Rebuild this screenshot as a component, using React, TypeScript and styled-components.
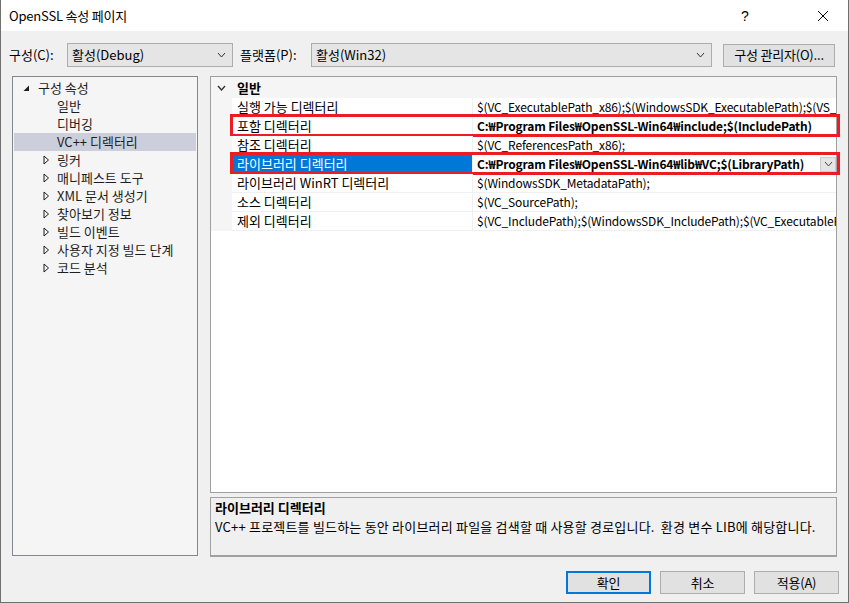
import React from "react";
import styled, { createGlobalStyle } from "styled-components";

const GlobalStyle = createGlobalStyle`
  html, body { margin: 0; padding: 0; background: #ffffff; }
  body {
    font-family: "Noto Sans CJK KR", "Noto Sans", sans-serif;
    font-size: 13px;
    color: #000000;
  }
  * { box-sizing: border-box; }
`;

const Window = styled.div`
  width: 849px;
  height: 603px;
  display: flex;
  flex-direction: column;
  background: #f0f0f0;
  border-left: 1px solid #707070;
  border-right: 1px solid #707070;
  border-bottom: 1px solid #707070;
  overflow: hidden;
`;

const TitleBar = styled.div`
  height: 31px;
  flex: none;
  background: #ffffff;
  display: flex;
  align-items: center;
  padding-left: 8px;
  padding-right: 2px;
`;

const TitleText = styled.div`
  flex: 1;
  line-height: 16px;
  color: #000;
  letter-spacing: -0.2px;
`;

const CaptionButton = styled.div<{ $gapRight?: number }>`
  width: 46px;
  height: 30px;
  display: flex;
  align-items: center;
  justify-content: center;
  margin-right: ${(p) => p.$gapRight ?? 0}px;
  font-family: "Liberation Sans", sans-serif;
  font-size: 14px;
  color: #000;
`;

const Toolbar = styled.div`
  display: flex;
  align-items: center;
  height: 24px;
  margin-top: 12px;
  padding-left: 8px;
`;

const ToolLabel = styled.div<{ $width: number; $pad?: number }>`
  width: ${(p) => p.$width}px;
  padding-left: ${(p) => p.$pad ?? 0}px;
  line-height: 16px;
  white-space: nowrap;
`;

const Combo = styled.div<{ $width: number }>`
  width: ${(p) => p.$width}px;
  height: 24px;
  background: #e5e5e5;
  border: 1px solid #adadad;
  display: flex;
  align-items: center;
  padding: 0 6px 0 4px;
`;

const ComboText = styled.div`
  flex: 1;
  line-height: 16px;
  white-space: nowrap;
`;

const ToolSpacer = styled.div`
  width: 11px;
  flex: none;
`;

const PushButton = styled.div<{ $width: number; $default?: boolean }>`
  width: ${(p) => p.$width}px;
  height: 23px;
  background: #e1e1e1;
  border: ${(p) => (p.$default ? "2px solid #0078d7" : "1px solid #adadad")};
  display: flex;
  align-items: center;
  justify-content: center;
  line-height: 16px;
  white-space: nowrap;
  letter-spacing: -0.2px;
`;

const Main = styled.div`
  display: flex;
  margin-top: 9px;
  padding-left: 11px;
  gap: 12px;
`;

const Tree = styled.div`
  width: 186px;
  height: 480px;
  background: #f5f5f5;
  border: 1px solid #828790;
  padding-top: 2px;
  display: flex;
  flex-direction: column;
`;

const TreeRow = styled.div<{ $level: number; $selected?: boolean }>`
  height: 18px;
  margin: 0 1px;
  display: flex;
  align-items: center;
  padding-left: ${(p) => (p.$level === 0 ? 9 : 29)}px;
  background: ${(p) => (p.$selected ? "#cccedb" : "transparent")};
  color: #1e1e1e;
  line-height: 16px;
  white-space: nowrap;
`;

const Expander = styled.div<{ $level: number }>`
  width: ${(p) => (p.$level === 0 ? 15 : 14)}px;
  height: 18px;
  display: flex;
  align-items: center;
  flex: none;
`;

const RightCol = styled.div`
  width: 627px;
  display: flex;
  flex-direction: column;
  gap: 4px;
`;

const Grid = styled.div`
  height: 417px;
  background: #ffffff;
  border: 1px solid #a0a0a0;
  display: flex;
  flex-direction: column;
`;

const CategoryRow = styled.div`
  height: 21px;
  display: flex;
  align-items: center;
  background: #f5f5f5;
  line-height: 16px;
`;

const CategoryLabel = styled.span`
  padding-left: 5px;
  font-weight: 700;
`;

const Gutter = styled.div`
  width: 21px;
  flex: none;
  align-self: stretch;
  display: flex;
  align-items: center;
  justify-content: center;
  background: #f5f5f5;
`;

const PropRow = styled.div`
  position: relative;
  height: 19px;
  display: flex;
`;

const NameCell = styled.div<{ $selected?: boolean }>`
  width: 241px;
  flex: none;
  display: flex;
  align-items: center;
  padding-left: 5px;
  border-right: 1px solid #f0f0f0;
  border-bottom: 1px solid #f0f0f0;
  background: ${(p) => (p.$selected ? "#0078d7" : "#ffffff")};
  color: ${(p) => (p.$selected ? "#ffffff" : "#000000")};
  line-height: 16px;
  white-space: nowrap;
`;

const ValueCell = styled.div`
  flex: 1;
  min-width: 0;
  display: flex;
  align-items: center;
  padding-left: 4px;
  border-bottom: 1px solid #f0f0f0;
  overflow: hidden;
`;

const ValueText = styled.div<{ $bold?: boolean }>`
  flex: 1;
  min-width: 0;
  overflow: hidden;
  white-space: nowrap;
  font-size: 12px;
  letter-spacing: -0.15px;
  font-weight: ${(p) => (p.$bold ? 700 : 400)};
  line-height: 16px;
`;

const DropButton = styled.div`
  width: 16px;
  height: 15px;
  flex: none;
  background: #e5e5e5;
  border: 1px solid #cccccc;
  display: flex;
  align-items: center;
  justify-content: center;
`;

const Highlight = styled.div`
  position: absolute;
  left: 19px;
  right: -4px;
  top: -3px;
  bottom: -1px;
  border: 3px solid #ec1c24;
  pointer-events: none;
`;

const Desc = styled.div`
  height: 60px;
  background: #f0f0f0;
  border: 1px solid #a0a0a0;
  border-bottom: 2px solid #a0a0a0;
  padding: 2px 4px 0 4px;
`;

const DescTitle = styled.div`
  font-weight: 700;
  line-height: 16px;
`;

const DescText = styled.div`
  margin-top: 3px;
  line-height: 16px;
  white-space: pre;
  letter-spacing: 0.2px;
`;

const Footer = styled.div`
  display: flex;
  justify-content: flex-end;
  gap: 9px;
  margin-top: 14px;
  padding-right: 9px;
`;

const Chevron = ({ w = 8, h = 5, stroke = "#333", sw = 1 }: { w?: number; h?: number; stroke?: string; sw?: number }) => (
  <svg width={w + 2} height={h + 2} viewBox={`0 0 ${w + 2} ${h + 2}`}>
    <polyline points={`1,1 ${w / 2 + 1},${h + 1} ${w + 1},1`} fill="none" stroke={stroke} strokeWidth={sw} />
  </svg>
);

const OpenTri = () => (
  <svg width="7" height="7" viewBox="0 0 7 7">
    <polygon points="6,0.5 6,6 0.5,6" fill="#1e1e1e" />
  </svg>
);

const ClosedTri = () => (
  <svg width="7" height="10" viewBox="0 0 7 10">
    <polygon points="1,1 5.5,5 1,9" fill="none" stroke="#1e1e1e" strokeWidth="1" />
  </svg>
);

const CloseGlyph = () => (
  <svg width="12" height="12" viewBox="0 0 12 12">
    <line x1="1" y1="1" x2="11" y2="11" stroke="#000" strokeWidth="1" />
    <line x1="11" y1="1" x2="1" y2="11" stroke="#000" strokeWidth="1" />
  </svg>
);

type TreeItem = { label: string; level: number; exp?: "open" | "closed"; selected?: boolean };

const treeItems: TreeItem[] = [
  { label: "구성 속성", level: 0, exp: "open" },
  { label: "일반", level: 1 },
  { label: "디버깅", level: 1 },
  { label: "VC++ 디렉터리", level: 1, selected: true },
  { label: "링커", level: 1, exp: "closed" },
  { label: "매니페스트 도구", level: 1, exp: "closed" },
  { label: "XML 문서 생성기", level: 1, exp: "closed" },
  { label: "찾아보기 정보", level: 1, exp: "closed" },
  { label: "빌드 이벤트", level: 1, exp: "closed" },
  { label: "사용자 지정 빌드 단계", level: 1, exp: "closed" },
  { label: "코드 분석", level: 1, exp: "closed" },
];

type Prop = { name: string; value: string; bold?: boolean; selected?: boolean; marked?: boolean };

const props: Prop[] = [
  {
    name: "실행 가능 디렉터리",
    value: "$(VC_ExecutablePath_x86);$(WindowsSDK_ExecutablePath);$(VS_ExecutablePath);$(MSBuild_ExecutablePath);$(FxCopDir);$(PATH);",
  },
  { name: "포함 디렉터리", value: "C:₩Program Files₩OpenSSL-Win64₩include;$(IncludePath)", bold: true, marked: true },
  { name: "참조 디렉터리", value: "$(VC_ReferencesPath_x86);" },
  {
    name: "라이브러리 디렉터리",
    value: "C:₩Program Files₩OpenSSL-Win64₩lib₩VC;$(LibraryPath)",
    bold: true,
    selected: true,
    marked: true,
  },
  { name: "라이브러리 WinRT 디렉터리", value: "$(WindowsSDK_MetadataPath);" },
  { name: "소스 디렉터리", value: "$(VC_SourcePath);" },
  {
    name: "제외 디렉터리",
    value: "$(VC_IncludePath);$(WindowsSDK_IncludePath);$(VC_ExecutablePath_x86);$(MSBuild_ExecutablePath);",
  },
];

export default function App() {
  return (
    <>
      <GlobalStyle />
      <Window>
        <TitleBar>
          <TitleText>OpenSSL 속성 페이지</TitleText>
          <CaptionButton $gapRight={32}>?</CaptionButton>
          <CaptionButton>
            <CloseGlyph />
          </CaptionButton>
        </TitleBar>

        <Toolbar>
          <ToolLabel $width={58}>구성(C):</ToolLabel>
          <Combo $width={166}>
            <ComboText>활성(Debug)</ComboText>
            <Chevron w={7} h={4} />
          </Combo>
          <ToolLabel $width={78} $pad={7}>
            플랫폼(P):
          </ToolLabel>
          <Combo $width={401}>
            <ComboText>활성(Win32)</ComboText>
            <Chevron w={7} h={4} />
          </Combo>
          <ToolSpacer />
          <PushButton $width={112}>구성 관리자(O)...</PushButton>
        </Toolbar>

        <Main>
          <Tree>
            {treeItems.map((t) => (
              <TreeRow key={t.label} $level={t.level} $selected={t.selected}>
                <Expander $level={t.level}>
                  {t.exp === "open" && <OpenTri />}
                  {t.exp === "closed" && <ClosedTri />}
                </Expander>
                {t.label}
              </TreeRow>
            ))}
          </Tree>

          <RightCol>
            <Grid>
              <CategoryRow>
                <Gutter>
                  <Chevron w={7} h={4} stroke="#333" sw={1.4} />
                </Gutter>
                <CategoryLabel>일반</CategoryLabel>
              </CategoryRow>
              {props.map((p) => (
                <PropRow key={p.name}>
                  <Gutter />
                  <NameCell $selected={p.selected}>{p.name}</NameCell>
                  <ValueCell>
                    <ValueText $bold={p.bold}>{p.value}</ValueText>
                    {p.selected && (
                      <DropButton>
                        <Chevron w={7} h={4} stroke="#444" />
                      </DropButton>
                    )}
                  </ValueCell>
                  {p.marked && <Highlight />}
                </PropRow>
              ))}
            </Grid>
            <Desc>
              <DescTitle>라이브러리 디렉터리</DescTitle>
              <DescText>VC++ 프로젝트를 빌드하는 동안 라이브러리 파일을 검색할 때 사용할 경로입니다.  환경 변수 LIB에 해당합니다.</DescText>
            </Desc>
          </RightCol>
        </Main>

        <Footer>
          <PushButton $width={85} $default>
            확인
          </PushButton>
          <PushButton $width={85}>취소</PushButton>
          <PushButton $width={85}>적용(A)</PushButton>
        </Footer>
      </Window>
    </>
  );
}
